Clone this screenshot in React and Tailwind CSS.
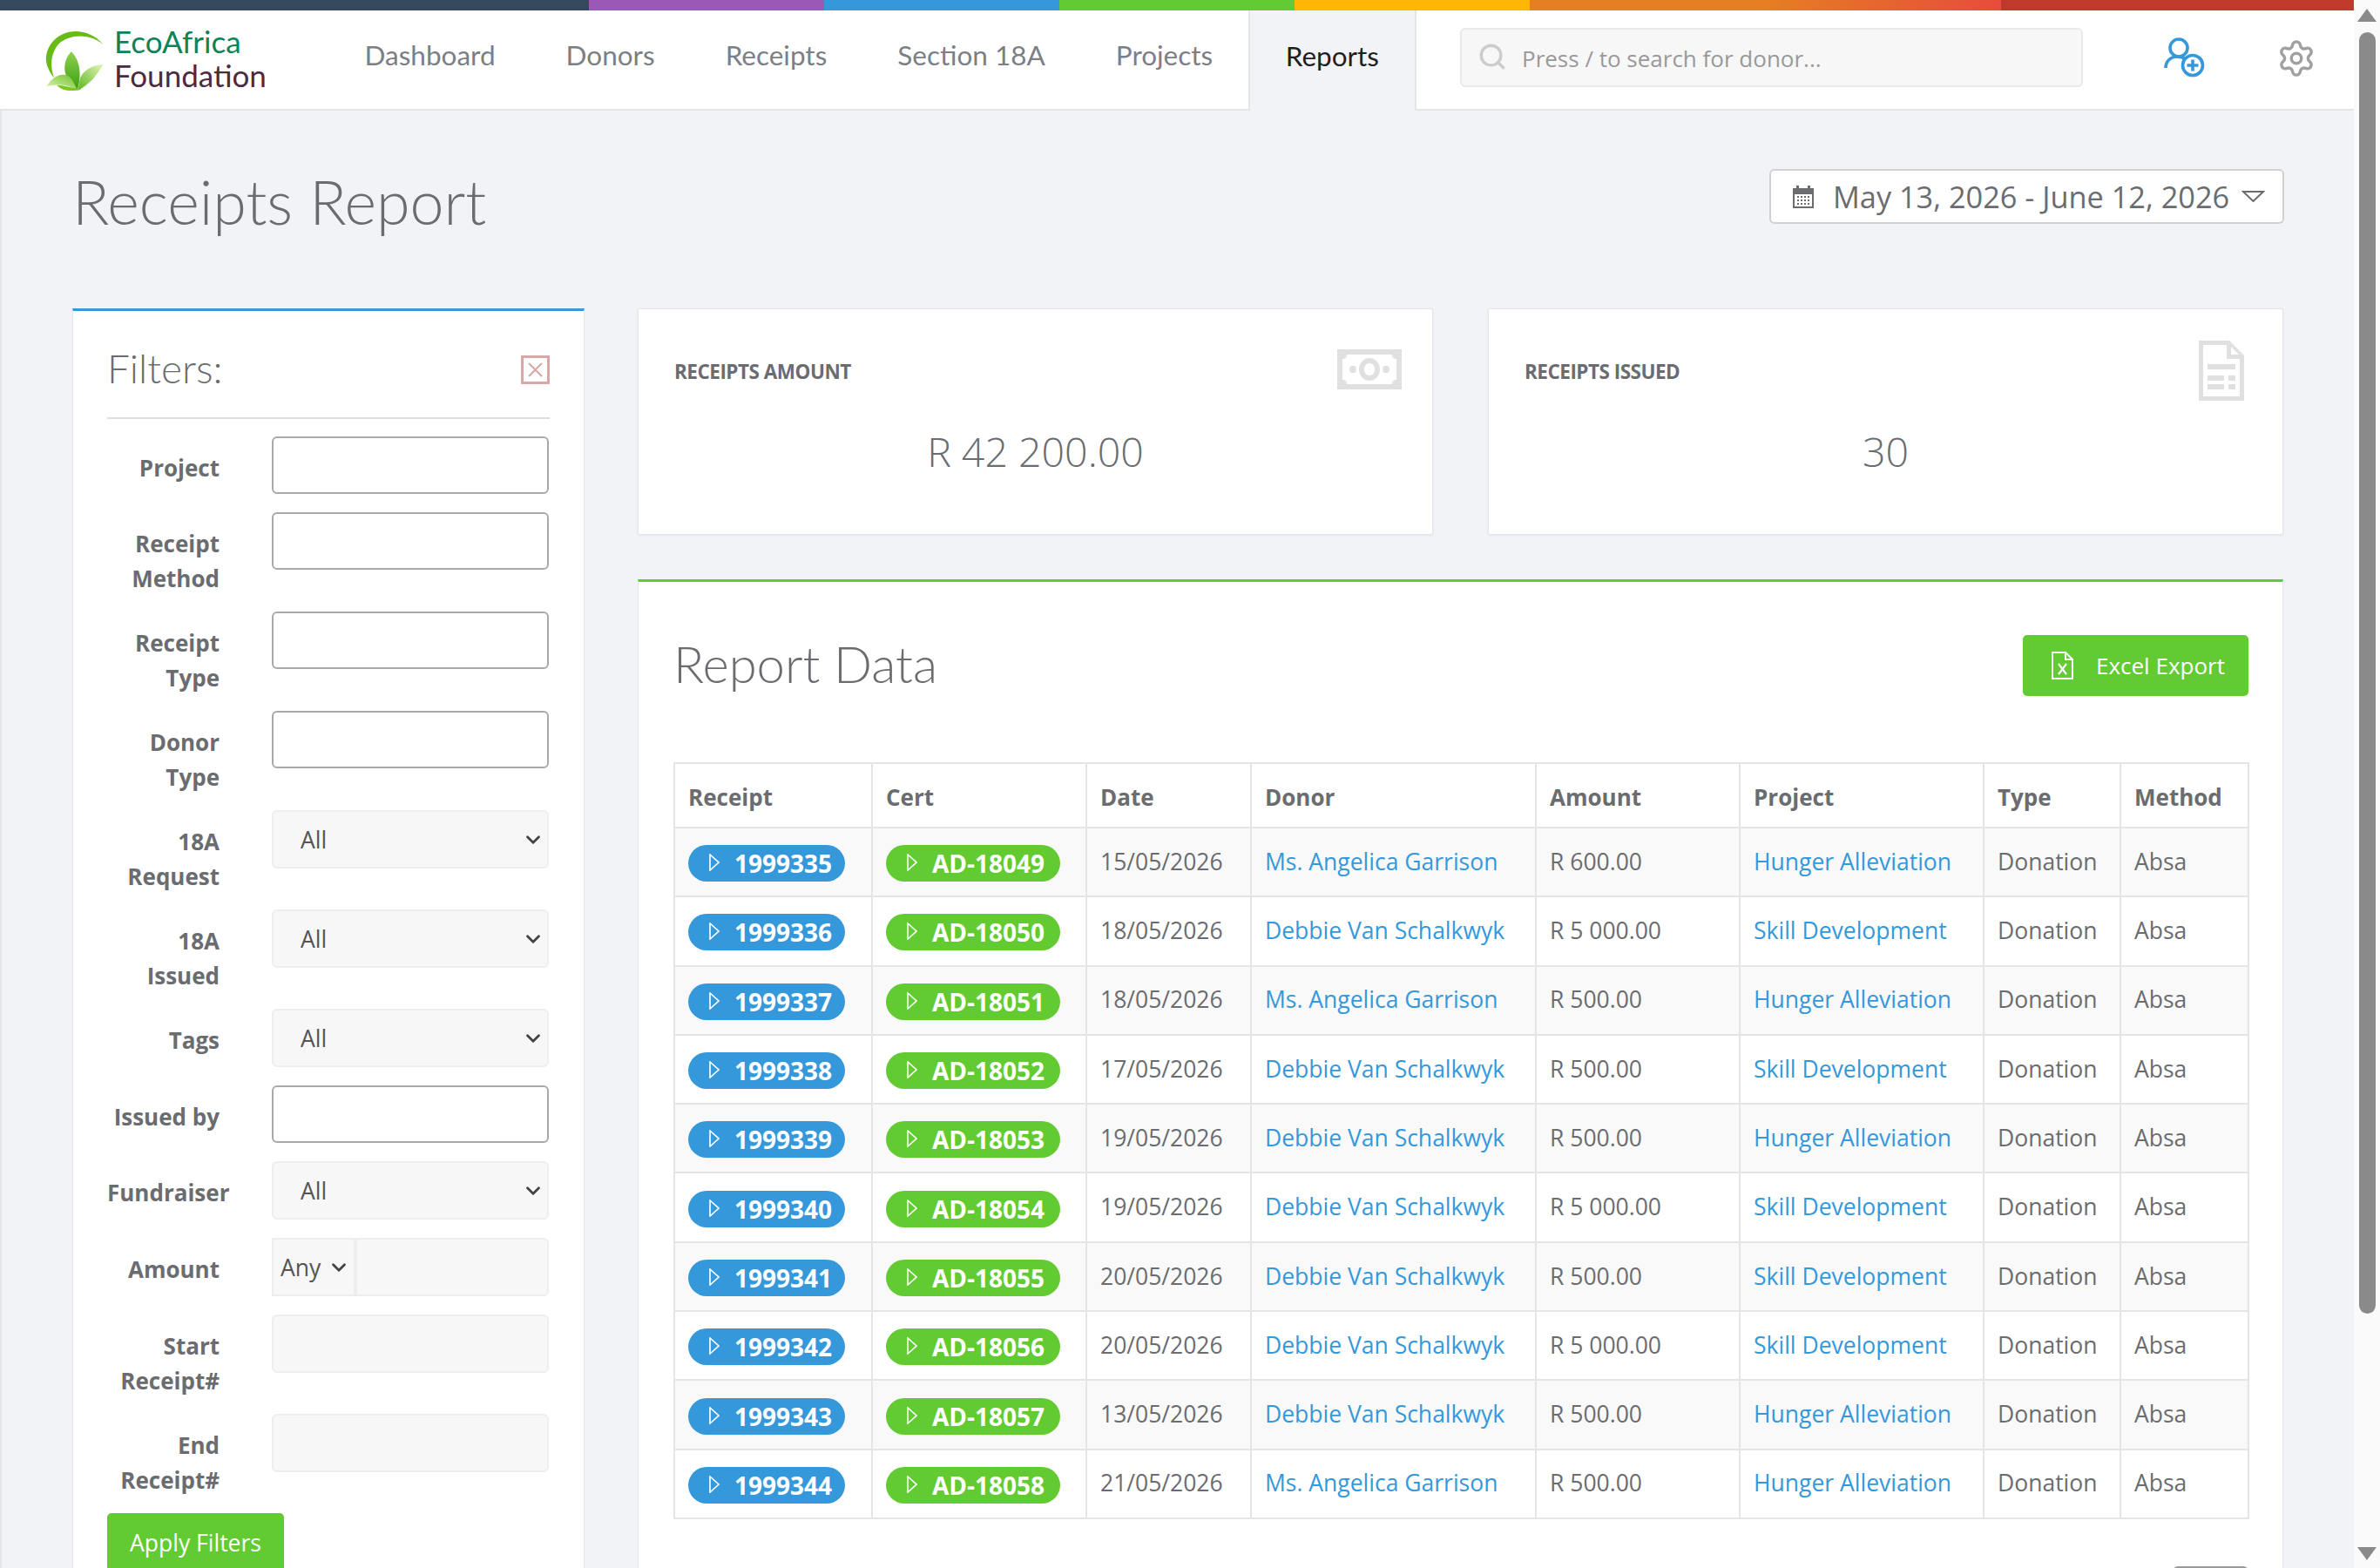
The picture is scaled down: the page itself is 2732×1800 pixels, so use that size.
import React from 'react';
import { ChevronDown, Search, Settings } from 'lucide-react';

const rows = [
    ['1999335', 'AD-18049', '15/05/2026', 'Ms. Angelica Garrison', 'R 600.00', 'Hunger Alleviation'],
    ['1999336', 'AD-18050', '18/05/2026', 'Debbie Van Schalkwyk', 'R 5 000.00', 'Skill Development'],
    ['1999337', 'AD-18051', '18/05/2026', 'Ms. Angelica Garrison', 'R 500.00', 'Hunger Alleviation'],
    ['1999338', 'AD-18052', '17/05/2026', 'Debbie Van Schalkwyk', 'R 500.00', 'Skill Development'],
    ['1999339', 'AD-18053', '19/05/2026', 'Debbie Van Schalkwyk', 'R 500.00', 'Hunger Alleviation'],
    ['1999340', 'AD-18054', '19/05/2026', 'Debbie Van Schalkwyk', 'R 5 000.00', 'Skill Development'],
    ['1999341', 'AD-18055', '20/05/2026', 'Debbie Van Schalkwyk', 'R 500.00', 'Skill Development'],
    ['1999342', 'AD-18056', '20/05/2026', 'Debbie Van Schalkwyk', 'R 5 000.00', 'Skill Development'],
    ['1999343', 'AD-18057', '13/05/2026', 'Debbie Van Schalkwyk', 'R 500.00', 'Hunger Alleviation'],
    ['1999344', 'AD-18058', '21/05/2026', 'Ms. Angelica Garrison', 'R 500.00', 'Hunger Alleviation'],
];

const columns = [
    ['Receipt', 'w-[227px]'],
    ['Cert', 'w-[246px]'],
    ['Date', 'w-[189px]'],
    ['Donor', 'w-[327px]'],
    ['Amount', 'w-[234px]'],
    ['Project', 'w-[280px]'],
    ['Type', 'w-[157px]'],
    ['Method', 'w-[147px]'],
];

const navItems = ['Dashboard', 'Donors', 'Receipts', 'Section 18A', 'Projects'];

const Logo = () => (
    <svg viewBox="60 40 215 225" className="w-[72px] h-[75px] shrink-0">
        <defs>
            <linearGradient id="leafA" x1="0" y1="0" x2="0" y2="1">
                <stop offset="0" stopColor="#8fd14f" />
                <stop offset="1" stopColor="#3a9e0f" />
            </linearGradient>
            <linearGradient id="leafB" x1="1" y1="0" x2="0" y2="1">
                <stop offset="0" stopColor="#e3f5b8" />
                <stop offset="1" stopColor="#5cb81f" />
            </linearGradient>
            <linearGradient id="leafC" x1="0" y1="1" x2="1" y2="0">
                <stop offset="0" stopColor="#e3f5b8" />
                <stop offset="1" stopColor="#6cc02a" />
            </linearGradient>
        </defs>
        <path d="M265 100 C225 55 170 45 125 65 C80 85 55 140 75 180 C80 195 88 205 96 215 C82 180 82 135 110 100 C145 65 215 60 265 100 Z" fill="#66bb14" />
        <path d="M155 125 C130 150 122 195 150 228 C160 240 170 250 176 258 C186 225 195 165 155 125 Z" fill="url(#leafA)" />
        <path d="M265 168 C225 172 195 190 186 215 C182 232 180 245 178 258 C215 240 245 205 265 168 Z" fill="url(#leafB)" />
        <path d="M70 245 C95 200 140 190 160 225 C168 240 172 250 176 258 C145 238 105 235 70 245 Z" fill="url(#leafC)" />
        <path d="M105 240 C125 262 155 262 190 255 C160 250 130 240 105 240 Z" fill="#7cc522" />
    </svg>
);

const UserPlus = () => (
    <svg viewBox="0 0 47 46" className="w-[47px] h-[46px]" fill="none" stroke="#3498db" strokeWidth="3.6">
        <circle cx="17" cy="12" r="10" />
        <path d="M2 35 C2 27 8 22 15 22 C19 22 22 23 25 25" />
        <circle cx="33" cy="32" r="11.5" fill="#fff" />
        <path d="M33 25.5 V38.5 M26.5 32 H39.5" />
    </svg>
);

const CalendarIcon = () => (
    <svg viewBox="0 0 26 26" className="w-[26px] h-[26px] shrink-0" fill="#6a6c6f">
        <path d="M1 3 H25 V26 H1 Z M3 10 V24 H23 V10 Z" fillRule="evenodd" />
        <rect x="5" y="0" width="3" height="5" />
        <rect x="18" y="0" width="3" height="5" />
        <path d="M6 12h2v2H6zM10 12h2v2h-2zM14 12h2v2h-2zM18 12h2v2h-2zM6 16h2v2H6zM10 16h2v2h-2zM14 16h2v2h-2zM18 16h2v2h-2zM6 20h2v2H6zM10 20h2v2h-2zM14 20h2v2h-2zM18 20h2v2h-2z" />
    </svg>
);

const MoneyIcon = () => (
    <svg viewBox="0 0 74 46" className="w-[74px] h-[46px]" fill="#e0e0e0">
        <path fillRule="evenodd" d="M0 0 H74 V46 H0 Z M11 6 C11 9 9 11 6 11 V35 C9 35 11 37 11 40 H63 C63 37 65 35 68 35 V11 C65 11 63 9 63 6 Z" />
        <circle cx="18" cy="23" r="4" />
        <circle cx="56" cy="23" r="4" />
        <path fillRule="evenodd" d="M37 10 C44 10 49 16 49 23 C49 30 44 36 37 36 C30 36 25 30 25 23 C25 16 30 10 37 10 Z M37 16 C33 16 31 19 31 23 C31 27 33 30 37 30 C41 30 43 27 43 23 C43 19 41 16 37 16 Z" />
    </svg>
);

const DocIcon = () => (
    <svg viewBox="0 0 52 69" className="w-[52px] h-[69px]" fill="#e0e0e0">
        <path fillRule="evenodd" d="M0 0 H35 L52 17 V69 H0 Z M5 5 V64 H47 V21 H32 V5 Z M37 7 V16 H46 Z" />
        <rect x="10" y="27" width="32" height="6" />
        <rect x="10" y="40" width="19" height="6" />
        <rect x="34" y="40" width="8" height="6" />
        <rect x="10" y="50" width="19" height="6" />
        <rect x="34" y="50" width="8" height="6" />
    </svg>
);

const ExcelIcon = () => (
    <svg viewBox="0 0 25 32" className="w-[25px] h-[32px] shrink-0" fill="none" stroke="#fff" strokeWidth="2">
        <path d="M1 1 H16 L24 9 V31 H1 Z" />
        <path d="M16 1 V9 H24" />
        <path d="M8 14 L17 26 M17 14 L8 26" strokeWidth="2.2" />
    </svg>
);

const Caret = () => (
    <svg viewBox="0 0 12 20" className="w-[12px] h-[20px] shrink-0 -mt-[2px]" fill="none" stroke="#fff" strokeWidth="1.6">
        <path d="M1 1 L11 10 L1 19 Z" />
    </svg>
);

const Label = ({ children }) => (
    <label className="w-[129px] shrink-0 pt-[16px] text-right font-bold text-[26px] leading-[40px] text-[#6a6c6f]">{children}</label>
);

const FormRow = ({ label, children, tight }) => (
    <div className={`flex gap-[60px] ${tight ? 'mb-[21px]' : 'mb-[18px]'}`}>
        <Label>{label}</Label>
        <div className="w-[318px] shrink-0">{children}</div>
    </div>
);

const TextInput = () => (
    <input type="text" className="block w-full h-[66px] bg-white border-2 border-[#a9a9a9] rounded-[6px] outline-none" />
);

const GreyInput = () => (
    <input type="text" className="block w-full h-[67px] bg-[#f7f7f7] border-2 border-[#eeeeee] rounded-[6px] outline-none" />
);

const SelectBox = () => (
    <div className="relative">
        <select className="block w-full h-[67px] appearance-none bg-[#f7f7f7] border-2 border-[#eeeeee] rounded-[6px] pl-[31px] pt-[3px] text-[26.5px] text-[#555555] outline-none">
            <option>All</option>
        </select>
        <ChevronDown className="absolute right-[5px] top-[21px] w-[26px] h-[26px] text-[#444444] pointer-events-none" strokeWidth={2.6} />
    </div>
);

const StatCard = ({ title, value, icon }) => (
    <div className="h-[260px] bg-white border border-[#e4e5e7] rounded-[2px] shadow-[0_1px_3px_rgba(0,0,0,0.06)] px-[41px] pt-[37px]">
        <div className="flex justify-between items-start h-[86px]">
            <div className="pt-[20px] text-[22.5px] leading-[30px] font-bold tracking-[-0.5px] text-[#6a6c6f]">{title}</div>
            {icon}
        </div>
        <div className="mt-[10px] text-center font-light text-[46.5px] leading-[60px] text-[#6a6c6f]">{value}</div>
    </div>
);

const App = () => {
    return (
        <div className="flex w-[2732px] h-[1800px] overflow-hidden bg-white font-['Open_Sans',sans-serif] text-[#6a6c6f]">
            <div className="w-[2702px] shrink-0 flex flex-col">
                <div className="h-[12px] shrink-0 bg-[linear-gradient(to_right,#34495e,#34495e_25%,#9b59b6_25%,#9b59b6_35%,#3498db_35%,#3498db_45%,#62cb31_45%,#62cb31_55%,#ffb606_55%,#ffb606_65%,#e67e22_65%,#e67e22_75%,#e74c3c_85%,#e74c3c_85%,#c0392b_85%,#c0392b_100%)]" />

                <nav className="h-[115px] shrink-0 flex bg-white border-b-2 border-[#e4e5e7]">
                    <div className="w-[378px] shrink-0 flex items-center pl-[50px] gap-[9px]">
                        <Logo />
                        <div className="font-['Lato',sans-serif] text-[35px] leading-[39px] pb-[4px]">
                            <div className="text-[#0d8458]">EcoAfrica</div>
                            <div className="text-[#4c2a40]">Foundation</div>
                        </div>
                    </div>
                    {navItems.map((item) => (
                        <a key={item} className="px-[40.5px] flex items-center pb-[9px] font-['Lato',sans-serif] text-[31.5px] text-[#7c7f85]">{item}</a>
                    ))}
                    <a className="px-[41px] h-[115px] flex items-center pb-[9px] bg-[#f1f3f6] border-x-2 border-[#e4e5e7] font-['Lato',sans-serif] text-[31.5px] text-[#1f1f1f]">Reports</a>
                    <div className="ml-[50px] mt-[20px] w-[715px] h-[68px] flex items-center gap-[17px] pl-[18px] bg-[#f7f7f7] border-2 border-[#e9e9e9] rounded-[6px]">
                        <Search className="w-[34px] h-[34px] text-[#cccccc] -mt-[3px]" strokeWidth={2.4} />
                        <input type="text" placeholder="Press / to search for donor..." className="flex-1 bg-transparent outline-none text-[26px] mt-[3px] placeholder:text-[#999999]" />
                    </div>
                    <div className="ml-[93px] mt-[31px]"><UserPlus /></div>
                    <div className="ml-[82px] mt-[32px]"><Settings className="w-[46px] h-[46px] text-[#a0a0a0]" strokeWidth={1.8} /></div>
                </nav>

                <main className="flex-1 bg-[#f1f3f6] border-l-2 border-[#e4e5e7] pl-[81px] pr-[80px] overflow-hidden">
                    <div className="flex justify-between items-start mt-[67px] mb-[97px] h-[63px]">
                        <h1 className="font-['Lato',sans-serif] font-light text-[70px] leading-[80px] -mt-[3px] text-[#6a6c6f]">Receipts Report</h1>
                        <button className="w-[591px] h-[63px] flex items-center gap-[21px] pl-[24px] bg-white border-2 border-[#d0d0d0] rounded-[6px] text-[34.3px] text-[#6a6c6f]">
                            <CalendarIcon />
                            <span className="whitespace-nowrap">May 13, 2026 - June 12, 2026</span>
                            <svg viewBox="0 0 27 13" className="w-[27px] h-[13px] shrink-0 -ml-[7px]" fill="none" stroke="#6a6c6f" strokeWidth="2"><path d="M2 1 H25 L13.5 12 Z" /></svg>
                        </button>
                    </div>

                    <div className="flex gap-[61px] items-start">
                        <aside className="w-[588px] shrink-0 bg-white border border-[#e4e5e7] border-t-[3px] border-t-[#3498db] px-[39px] pt-[42px] pb-[60px]">
                            <div className="flex justify-between items-center h-[48px] mb-[32px]">
                                <h3 className="font-['Lato',sans-serif] font-light text-[46px] leading-[48px] text-[#6a6c6f]">Filters:</h3>
                                <button className="w-[33px] h-[33px] mt-[3px] flex items-center justify-center border-[3px] border-[#d8a8a8]">
                                    <svg viewBox="0 0 16 16" className="w-[17px] h-[17px]" fill="none" stroke="#d8a8a8" strokeWidth="2"><path d="M1 1 L15 15 M15 1 L1 15" /></svg>
                                </button>
                            </div>
                            <div className="border-t-2 border-[#dddddd] pt-[20px]">
                                <FormRow label="Project" tight><TextInput /></FormRow>
                                <FormRow label="Receipt Method"><TextInput /></FormRow>
                                <FormRow label="Receipt Type"><TextInput /></FormRow>
                                <FormRow label="Donor Type"><TextInput /></FormRow>
                                <FormRow label="18A Request"><SelectBox /></FormRow>
                                <FormRow label="18A Issued"><SelectBox /></FormRow>
                                <FormRow label="Tags" tight><SelectBox /></FormRow>
                                <FormRow label="Issued by" tight><TextInput /></FormRow>
                                <FormRow label="Fundraiser" tight><SelectBox /></FormRow>
                                <FormRow label="Amount" tight>
                                    <div className="flex h-[67px]">
                                        <div className="relative w-[96px] shrink-0">
                                            <select className="block w-full h-full appearance-none bg-[#f7f7f7] border-2 border-[#eeeeee] pl-[8px] pt-[3px] text-[26.5px] text-[#555555] outline-none">
                                                <option>Any</option>
                                            </select>
                                            <ChevronDown className="absolute right-[6px] top-[21px] w-[26px] h-[26px] text-[#444444] pointer-events-none" strokeWidth={2.6} />
                                        </div>
                                        <input type="text" className="block flex-1 min-w-0 bg-[#f7f7f7] border-2 border-[#eeeeee] rounded-r-[6px] outline-none" />
                                    </div>
                                </FormRow>
                                <FormRow label="Start Receipt#"><GreyInput /></FormRow>
                                <FormRow label="End Receipt#"><GreyInput /></FormRow>
                                <button className="w-[203px] h-[70px] bg-[#62cb31] rounded-[5px] text-[26.5px] text-white">Apply Filters</button>
                            </div>
                        </aside>

                        <div className="w-[1889px] shrink-0">
                            <div className="grid grid-cols-2 gap-[63px] mb-[51px]">
                                <StatCard title="RECEIPTS AMOUNT" value="R 42 200.00" icon={<div className="mt-[9px] -mr-[6px]"><MoneyIcon /></div>} />
                                <StatCard title="RECEIPTS ISSUED" value="30" icon={<div className="-mt-[1px] mr-[3px]"><DocIcon /></div>} />
                            </div>

                            <section className="bg-white border border-[#e4e5e7] border-t-[3px] border-t-[#62cb31] pl-[40px] pr-[39px] pt-[61px] pb-[40px]">
                                <div className="flex justify-between items-center h-[70px] mb-[76px]">
                                    <h2 className="font-['Lato',sans-serif] font-light text-[58px] leading-[70px] -mt-[4px] text-[#6a6c6f]">Report Data</h2>
                                    <button className="w-[259px] h-[70px] flex items-center gap-[26px] pl-[33px] bg-[#62cb31] rounded-[5px] text-[26px] text-white">
                                        <ExcelIcon />
                                        <span>Excel Export</span>
                                    </button>
                                </div>

                                <table className="table-fixed w-[1807px] border-collapse text-[26.5px] text-[#6a6c6f]">
                                    <colgroup>
                                        {columns.map(([name, width]) => <col key={name} className={width} />)}
                                    </colgroup>
                                    <thead>
                                        <tr className="h-[74px]">
                                            {columns.map(([name]) => (
                                                <th key={name} className="border-2 border-[#e4e5e7] px-[15px] pt-[5px] text-left font-bold text-[26px]">{name}</th>
                                            ))}
                                        </tr>
                                    </thead>
                                    <tbody>
                                        {rows.map((row, i) => (
                                            <tr key={row[0]} className={`h-[79.3px] ${i % 2 === 0 ? 'bg-[#f9f9f9]' : 'bg-white'}`}>
                                                <td className="border-2 border-[#e4e5e7] px-[15px]">
                                                    <span className="mt-[3px] w-[180px] h-[42px] flex items-center gap-[17px] pl-[24px] rounded-full bg-[#3498db] text-white font-bold text-[28px]">
                                                        <Caret />{row[0]}
                                                    </span>
                                                </td>
                                                <td className="border-2 border-[#e4e5e7] px-[15px]">
                                                    <span className="mt-[3px] w-[200px] h-[42px] flex items-center gap-[17px] pl-[24px] rounded-full bg-[#62cb31] text-white font-bold text-[28px]">
                                                        <Caret />{row[1]}
                                                    </span>
                                                </td>
                                                <td className="border-2 border-[#e4e5e7] px-[15px] whitespace-nowrap">{row[2]}</td>
                                                <td className="border-2 border-[#e4e5e7] px-[15px] whitespace-nowrap text-[#3498db]">{row[3]}</td>
                                                <td className="border-2 border-[#e4e5e7] px-[15px] whitespace-nowrap">{row[4]}</td>
                                                <td className="border-2 border-[#e4e5e7] px-[15px] whitespace-nowrap text-[#3498db]">{row[5]}</td>
                                                <td className="border-2 border-[#e4e5e7] px-[15px]">Donation</td>
                                                <td className="border-2 border-[#e4e5e7] px-[15px]">Absa</td>
                                            </tr>
                                        ))}
                                    </tbody>
                                </table>

                                <div className="flex justify-end mt-[54px]">
                                    <div className="w-[87px] h-[60px] bg-white border-2 border-[#999999] rounded-[6px]" />
                                </div>
                            </section>
                        </div>
                    </div>
                </main>
            </div>

            <div className="w-[30px] shrink-0 bg-[#fafafa] flex flex-col items-center pt-[10px]">
                <div className="w-0 h-0 border-x-[11px] border-x-transparent border-b-[15px] border-b-[#8a8a8a]" />
                <div className="mt-[12px] w-[19px] h-[1471px] rounded-full bg-[#8a8a8a]" />
                <div className="mt-auto mb-[9px] w-0 h-0 border-x-[11px] border-x-transparent border-t-[15px] border-t-[#8a8a8a]" />
            </div>
        </div>
    );
};

export default App;
